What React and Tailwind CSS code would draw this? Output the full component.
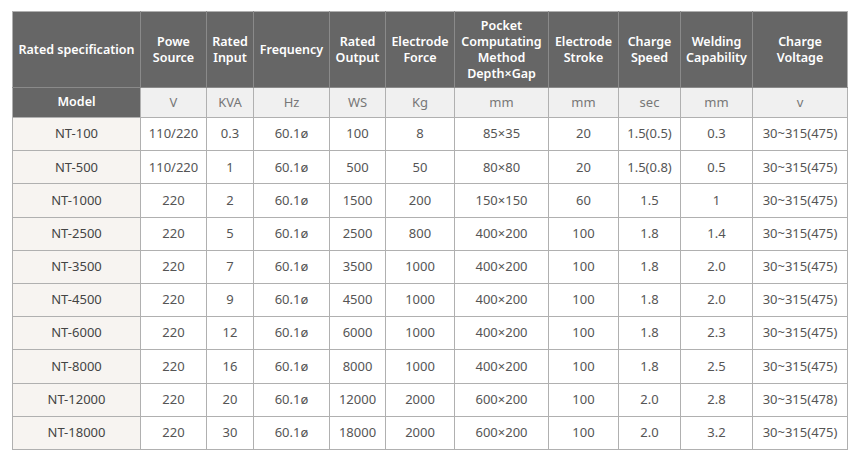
const cols = [128, 66, 47, 76, 56, 69, 94, 70, 62, 72, 95];

const headers = [
  ["Rated specification"],
  ["Powe", "Source"],
  ["Rated", "Input"],
  ["Frequency"],
  ["Rated", "Output"],
  ["Electrode", "Force"],
  ["Pocket", "Computating", "Method", "Depth×Gap"],
  ["Electrode", "Stroke"],
  ["Charge", "Speed"],
  ["Welding", "Capability"],
  ["Charge", "Voltage"],
];

const units = ["V", "KVA", "Hz", "WS", "Kg", "mm", "mm", "sec", "mm", "v"];

const rows = [
  ["NT-100", "110/220", "0.3", "60.1ø", "100", "8", "85×35", "20", "1.5(0.5)", "0.3", "30~315(475)"],
  ["NT-500", "110/220", "1", "60.1ø", "500", "50", "80×80", "20", "1.5(0.8)", "0.5", "30~315(475)"],
  ["NT-1000", "220", "2", "60.1ø", "1500", "200", "150×150", "60", "1.5", "1", "30~315(475)"],
  ["NT-2500", "220", "5", "60.1ø", "2500", "800", "400×200", "100", "1.8", "1.4", "30~315(475)"],
  ["NT-3500", "220", "7", "60.1ø", "3500", "1000", "400×200", "100", "1.8", "2.0", "30~315(475)"],
  ["NT-4500", "220", "9", "60.1ø", "4500", "1000", "400×200", "100", "1.8", "2.0", "30~315(475)"],
  ["NT-6000", "220", "12", "60.1ø", "6000", "1000", "400×200", "100", "1.8", "2.3", "30~315(475)"],
  ["NT-8000", "220", "16", "60.1ø", "8000", "1000", "400×200", "100", "1.8", "2.5", "30~315(475)"],
  ["NT-12000", "220", "20", "60.1ø", "12000", "2000", "600×200", "100", "2.0", "2.8", "30~315(478)"],
  ["NT-18000", "220", "30", "60.1ø", "18000", "2000", "600×200", "100", "2.0", "3.2", "30~315(475)"],
];

export default function App() {
  return (
    <div className="min-h-[464px] bg-white pl-3 pt-[11px] font-['Noto_Sans',sans-serif]">
      <table className="table-fixed border-collapse text-center text-[13px]" style={{ width: 835 }}>
        <colgroup>
          {cols.map((w, i) => (
            <col key={i} style={{ width: w }} />
          ))}
        </colgroup>
        <thead>
          <tr className="h-[76px]">
            {headers.map((lines, i) => (
              <th
                key={i}
                className="border border-[#8a8a8a] border-t-[#b0b0b0] bg-[#666666] p-0 text-[12.5px] font-semibold leading-[16px] text-white first:border-l-[#b0b0b0] last:border-r-[#b0b0b0]"
              >
                {lines.map((l) => (
                  <div key={l}>{l}</div>
                ))}
              </th>
            ))}
          </tr>
          <tr className="h-[30px]">
            <th className="border border-[#b0b0b0] border-t-[#8a8a8a] bg-[#666666] p-0 text-[12.5px] font-semibold text-white">
              Model
            </th>
            {units.map((u, i) => (
              <td key={i} className="border border-[#b0b0b0] bg-[#f0f0f0] p-0 text-[#777777]">
                {u}
              </td>
            ))}
          </tr>
        </thead>
        <tbody>
          {rows.map((r) => (
            <tr key={r[0]} className="h-[33.2px]">
              {r.map((c, i) => (
                <td
                  key={i}
                  className={`border border-[#b0b0b0] p-0 whitespace-nowrap ${
                    i === 0 ? "bg-[#f7f4f1] text-[#444444]" : "bg-white text-[#555555]"
                  }`}
                >
                  {c}
                </td>
              ))}
            </tr>
          ))}
        </tbody>
      </table>
    </div>
  );
}
